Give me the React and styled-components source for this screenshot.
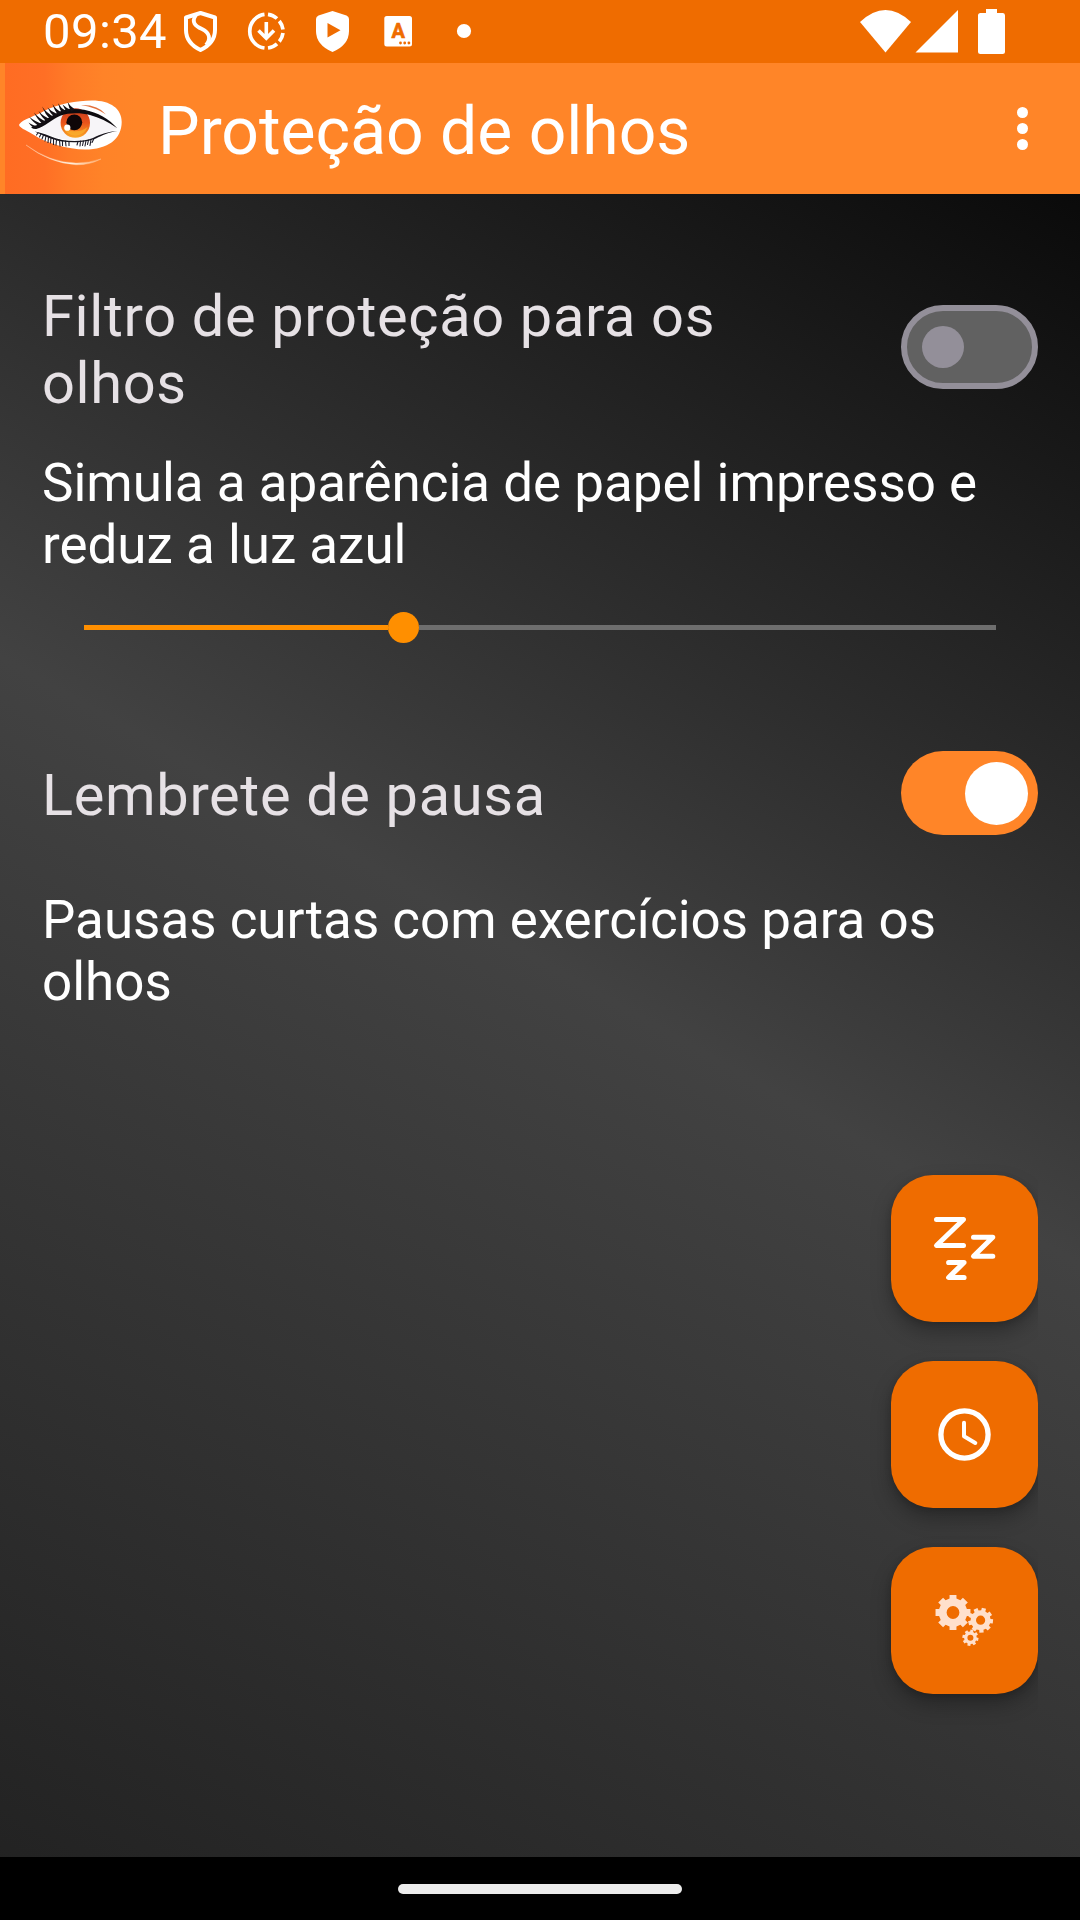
import React from "react";
import styled, { createGlobalStyle } from "styled-components";

const GlobalStyle = createGlobalStyle`
  * { box-sizing: border-box; }
  body { margin: 0; background: #000; font-family: Roboto, "Liberation Sans", sans-serif; }
`;

const Screen = styled.div`
  width: 1080px;
  height: 1920px;
  display: flex;
  flex-direction: column;
  overflow: hidden;
  background: linear-gradient(209.36deg, #000 0%, #424242 50%, #212121 100%);
`;

const StatusBar = styled.header`
  flex: none;
  height: 63px;
  display: flex;
  align-items: center;
  padding: 0 75px 0 43px;
  background: #ef6c00;
  color: #fff;
`;

const Time = styled.span`
  width: 124px;
  font-size: 49px;
  line-height: 63px;
  letter-spacing: 0.4px;
  white-space: nowrap;
`;

const StatusIcon = styled.svg`
  flex: none;
  display: block;
  width: ${(p) => p.$w}px;
  height: 63px;
`;

const Spacer = styled.div`
  flex: 1;
`;

const AppBar = styled.div`
  flex: none;
  height: 131px;
  display: flex;
  align-items: center;
  padding: 0 52px 0 5px;
  background: #ff8528;
`;

const Logo = styled.svg`
  flex: none;
  width: 131px;
  height: 131px;
  display: block;
`;

const Title = styled.h1`
  flex: 1;
  margin: 0 0 0 22px;
  padding-top: 6px;
  font-size: 66px;
  font-weight: 400;
  line-height: 77px;
  color: #fff;
  white-space: nowrap;
`;

const MenuButton = styled.button`
  display: flex;
  flex-direction: column;
  gap: 5px;
  padding: 0;
  border: 0;
  background: none;
`;

const Dot = styled.span`
  width: 11px;
  height: 11px;
  border-radius: 50%;
  background: #fff;
`;

const Content = styled.main`
  flex: 1;
  display: flex;
  flex-direction: column;
  padding: 89px 42px 0;
`;

const SettingRow = styled.div`
  flex: none;
  display: flex;
  align-items: flex-start;
  justify-content: space-between;
  height: ${(p) => p.$h}px;
  margin-top: ${(p) => p.$top || 0}px;
`;

const Label = styled.div`
  width: 720px;
  margin-top: ${(p) => p.$top || 0}px;
  font-size: 57.75px;
  line-height: 67px;
  letter-spacing: 0.65px;
  color: #e6e1e5;
`;

const Description = styled.p`
  flex: none;
  margin: ${(p) => p.$top}px 0 0;
  font-size: 52.95px;
  line-height: 62px;
  color: #fff;
`;

const Toggle = styled.button`
  flex: none;
  display: flex;
  align-items: center;
  justify-content: ${(p) => (p.$on ? "flex-end" : "flex-start")};
  width: 137px;
  height: 84px;
  margin: ${(p) => p.$top || 0}px 0 0;
  padding: ${(p) => (p.$on ? "0 10.5px" : "0 15px")};
  border: ${(p) => (p.$on ? "0" : "6px solid #938f99")};
  border-radius: 42px;
  background: ${(p) => (p.$on ? "#ff8528" : "#616161")};
`;

const Thumb = styled.span`
  width: ${(p) => (p.$on ? 63 : 42)}px;
  height: ${(p) => (p.$on ? 63 : 42)}px;
  border-radius: 50%;
  background: ${(p) => (p.$on ? "#fff" : "#938f99")};
`;

const Slider = styled.div`
  flex: none;
  display: flex;
  align-items: center;
  height: 31px;
  margin: 36px 42px 0;
`;

const Track = styled.div`
  width: ${(p) => p.$w};
  flex: ${(p) => (p.$w ? "none" : 1)};
  height: 5px;
  background: ${(p) => p.$color};
`;

const SliderThumb = styled.div`
  flex: none;
  width: 31px;
  height: 31px;
  border-radius: 50%;
  background: #ff8f00;
`;

const FabColumn = styled.div`
  flex: none;
  align-self: flex-end;
  display: flex;
  flex-direction: column;
  gap: 39px;
  margin-top: 162px;
  clip-path: inset(-40px 0 -60px -40px);
`;

const Fab = styled.button`
  width: 147px;
  height: 147px;
  padding: 0;
  border: 0;
  border-radius: 42px;
  background: #ef6c00;
  box-shadow: 0 10px 20px rgba(0, 0, 0, 0.28), 0 2px 6px rgba(0, 0, 0, 0.15);
`;

const FabIcon = styled.svg`
  display: block;
  width: 147px;
  height: 147px;
`;

const NavBar = styled.footer`
  flex: none;
  height: 63px;
  display: flex;
  align-items: center;
  justify-content: center;
  background: #000;
`;

const Handle = styled.div`
  width: 284px;
  height: 10px;
  margin-top: 1px;
  border-radius: 5px;
  background: #ececec;
`;

function gearPath(cx, cy, root, tip, hole, teeth, turn) {
  const step = (Math.PI * 2) / teeth;
  const pt = (r, a) => `${(cx + r * Math.cos(a)).toFixed(2)} ${(cy + r * Math.sin(a)).toFixed(2)}`;
  const points = [];
  for (let i = 0; i < teeth; i++) {
    const a = turn + i * step;
    const half = step * 0.31;
    const tipHalf = Math.asin((root * Math.sin(half)) / tip);
    points.push(pt(root, a - half), pt(tip, a - tipHalf), pt(tip, a + tipHalf), pt(root, a + half));
  }
  return `M${points.join("L")}Z M${cx - hole} ${cy}a${hole} ${hole} 0 1 0 ${hole * 2} 0a${hole} ${hole} 0 1 0 ${-hole * 2} 0Z`;
}

// Each upper lash: [root x, root y, bend x, bend y, tip x, tip y]
const upperLashes = [
  [38, 127.5, 32, 126.5, 28.5, 122.5],
  [42, 125.5, 34, 122.5, 29, 116.5],
  [45, 123, 38, 119.5, 34, 112.5],
  [49, 120.5, 42, 117, 38.5, 111],
  [52, 118, 45.5, 113.5, 42, 106.5],
  [56, 115.5, 50.5, 112.5, 47.5, 107.5],
  [60, 113.5, 55, 110.5, 52.5, 104],
  [64, 112, 60, 109, 58, 103.2],
  [69, 111, 65, 108.5, 62.5, 104.5],
  [73, 110.5, 69.5, 107.5, 67.5, 102],
];
const lashPath = ([rx, ry, bx, by, tx, ty]) =>
  `M${rx - 1.8} ${ry + 1.2}Q${bx - 0.4} ${by + 0.7} ${tx} ${ty}Q${bx + 1} ${by - 0.6} ${rx + 2} ${ry - 1}Z`;

const lowerLashes = [
  "M38 133 L36.5 135", "M41 134 L39.5 137", "M43.500 135 L42 139", "M46 136 L45 141", "M48.500 137 L48 142.500",
  "M51 138 L50.500 143", "M53.500 138.500 L53.500 144.500", "M56.500 139.500 L56 145", "M59.500 140 L60 146", "M62.500 140.500 L62.500 145.500",
  "M65.500 141 L66 146", "M69 141.500 L69 145.500", "M78 141.500 L77 145", "M80.500 141 L80 146", "M83.500 141 L82.500 145.500",
  "M86 140.500 L85 146", "M88.500 140 L87.500 144.500", "M91 139.500 L90 145.500", "M94 138.500 L92 142.500",
];

function EyeLogo() {
  return (
    <Logo viewBox="5 63 131 131">
      <defs>
        <linearGradient id="fade" x1="0" x2="1">
          <stop offset="0" stopColor="#ff6c23" />
          <stop offset="0.3" stopColor="#ff6f25" />
          <stop offset="0.5" stopColor="#ff7b27" />
          <stop offset="0.75" stopColor="#ff8328" />
          <stop offset="1" stopColor="#ff8528" />
        </linearGradient>
        <linearGradient id="iris" x1="0" x2="0" y1="0" y2="1">
          <stop offset="0" stopColor="#c4391c" />
          <stop offset="0.5" stopColor="#ea541b" />
          <stop offset="1" stopColor="#fba726" />
        </linearGradient>
        <linearGradient id="swoosh" x1="0" x2="1">
          <stop offset="0" stopColor="#ffd9b8" stopOpacity="0.7" />
          <stop offset="0.6" stopColor="#fff0df" />
          <stop offset="1" stopColor="#ffc08a" stopOpacity="0.6" />
        </linearGradient>
      </defs>
      <rect x="5" y="63" width="131" height="131" fill="url(#fade)" />
      <path d="M19.500 124C23 119 36 116 45 110.500C58 104 77 100.500 92 100.500C111 100.500 121.700 109 121.700 122C121.700 139 108 149.500 85 149.500C68 149.500 46 143 34 135C28 131 17 127 19.500 124Z" fill="#fff" />
      <path d="M37 130C52 115 68 111 84 113C99 115 110 121 117 129C105 131 99 138 86 140.500C66 142 50 136 37 130Z" fill="#f7f5f8" />
      <circle cx="75.300" cy="123" r="14.700" fill="url(#iris)" />
      <path d="M63 127A13 13 0 0 0 87.500 127A16 12 0 0 1 63 127Z" fill="#fbb02d" opacity="0.75" />
      <circle cx="74.300" cy="122.300" r="7.900" fill="#0f0608" />
      <circle cx="67.300" cy="127.700" r="3.100" fill="#fff" />
      <path d="M31 127.500C40 125 48 117 60 111.500C67 108.500 76 108.500 84 109.800C98 112.500 109 119 117.300 128.300C108 121.500 99 117.500 90 115C80 112.500 68 113 61 115.500C52 119 45 127 36 129Q33 129 31 127.500Z" fill="#0e0b0f" />
      <path d="M34.500 131.500C45 133 52 138 62 140C74 142 86 141 93 138C101 134 108 131.500 117.500 131C109 132 102 135.500 96 138.500C88 142 74 143.300 62 141.500C51 139.500 42 135 34.500 131.500Z" fill="#17141c" />
      <path d="M81 105Q98 104.500 106 114.500Q96 107.500 81 105Z" fill="#e2703c" />
      <g fill="#141015">
        {upperLashes.map((lash) => <path key={lash[0]} d={lashPath(lash)} />)}
      </g>
      <g fill="none" stroke="#1d1c2a" strokeWidth="1.100" strokeLinecap="round">
        {lowerLashes.map((d) => <path key={d} d={d} />)}
      </g>
      <path d="M26 145Q50 162.500 76 163Q89 163.200 101 159Q90 165 76 164.800Q49 163 26 145Z" fill="url(#swoosh)" stroke="#ffe3c8" strokeWidth="0.300" />
    </Logo>
  );
}

function NotificationIcons() {
  return (
    <>
      <StatusIcon $w={66} viewBox="167 0 66 63" fill="none" stroke="#fff" strokeWidth="4" strokeLinejoin="round">
        <path d="M200.500 13L215 17.500V30Q215 43 200.500 50Q186 43 186 30V17.500Z" />
        <path d="M196 15C191 22 195 26 202 29C210 33 211 39 206 45" strokeWidth="3.800" />
      </StatusIcon>
      <StatusIcon $w={66} viewBox="233 0 66 63" fill="none" stroke="#fff" strokeWidth="3.700">
        <path d="M264.500 14.300A17 17 0 0 0 264.500 48" />
        <path d="M268 14.300A17 17 0 0 1 277 18.500" />
        <path d="M279.300 21A17 17 0 0 1 283 29.500" />
        <path d="M283 33A17 17 0 0 1 279.300 41.500" />
        <path d="M277 43.800A17 17 0 0 1 268 48" />
        <path d="M266.300 22V38M258.500 30.500L266.300 38.300L274 30.500" strokeWidth="3.600" />
      </StatusIcon>
      <StatusIcon $w={66} viewBox="299 0 66 63">
        <path d="M332.500 11L346.500 15.500Q349 16.500 349 19V31Q349 45 332.500 52Q316 45 316 31V19Q316 16.500 318.500 15.500Z" fill="#fff" />
        <path d="M327.500 23V37.500L340.500 30.200Z" fill="#ef6c00" />
      </StatusIcon>
      <StatusIcon $w={66} viewBox="365 0 66 63">
        <rect x="384.300" y="16" width="27.700" height="30.500" rx="2.500" fill="#fff" />
        <text x="398.200" y="37.800" textAnchor="middle" fontFamily="Roboto, sans-serif" fontWeight="700" fontSize="20" fill="#ef6c00" stroke="#ef6c00" strokeWidth="0.600">A</text>
        <g fill="#ef6c00">
          <circle cx="400.500" cy="43" r="1.400" />
          <circle cx="404.700" cy="43" r="1.400" />
          <circle cx="408.900" cy="43" r="1.400" />
        </g>
      </StatusIcon>
      <StatusIcon $w={66} viewBox="431 0 66 63">
        <circle cx="464" cy="31" r="7.100" fill="#fff" />
      </StatusIcon>
    </>
  );
}

export default function App() {
  return (
    <>
      <GlobalStyle />
      <Screen>
        <StatusBar>
          <Time>09:34</Time>
          <NotificationIcons />
          <Spacer />
          <StatusIcon $w={54} viewBox="859 0 54 63">
            <path d="M860 22Q885.500 -2 911 22L885.500 52.500Z" fill="#fff" />
          </StatusIcon>
          <StatusIcon $w={50} viewBox="913 0 50 63">
            <path d="M915.500 52.500L958 10V52.500Z" fill="#fff" />
          </StatusIcon>
          <StatusIcon $w={42} viewBox="963 0 42 63">
            <path d="M986 9H997V13H1003Q1005 13 1005 15.500V51.500Q1005 54 1002.500 54H980.500Q978 54 978 51.500V15.500Q978 13 980.500 13H986Z" fill="#fff" />
          </StatusIcon>
        </StatusBar>
        <AppBar>
          <EyeLogo />
          <Title>Proteção de olhos</Title>
          <MenuButton aria-label="Menu">
            <Dot />
            <Dot />
            <Dot />
          </MenuButton>
        </AppBar>
        <Content>
          <SettingRow $h={134}>
            <Label>Filtro de proteção para os olhos</Label>
            <Toggle $on={false} $top={22}><Thumb $on={false} /></Toggle>
          </SettingRow>
          <Description $top={35}>Simula a aparência de papel impresso e reduz a luz azul</Description>
          <Slider>
            <Track $w="304px" $color="#ff8f00" />
            <SliderThumb />
            <Track $color="#6e6e6e" />
          </Slider>
          <SettingRow $h={84} $top={108}>
            <Label $top={11}>Lembrete de pausa</Label>
            <Toggle $on><Thumb $on /></Toggle>
          </SettingRow>
          <Description $top={54}>Pausas curtas com exercícios para os olhos</Description>
          <FabColumn>
            <Fab aria-label="Dormir">
              <FabIcon viewBox="0 0 147 147" fill="none" stroke="#fff" strokeLinecap="round" strokeLinejoin="round">
                <polyline points="45.5,44.500 72.500,44.500 45.500,70.500 72.500,70.500" strokeWidth="5" />
                <polyline points="82.500,62.300 101.800,62.300 82.500,81.200 101.800,81.200" strokeWidth="5" />
                <polyline points="57.700,87.500 73,87.500 57.700,102.500 73,102.500" strokeWidth="5.200" />
              </FabIcon>
            </Fab>
            <Fab aria-label="Horário">
              <FabIcon viewBox="0 0 147 147" fill="none" stroke="#fff" strokeLinecap="round" strokeLinejoin="round">
                <circle cx="73.500" cy="73.500" r="23.600" strokeWidth="5.300" />
                <path d="M73 61.700V75.300L84.300 82" strokeWidth="4" />
              </FabIcon>
            </Fab>
            <Fab aria-label="Configurações">
              <FabIcon viewBox="0 0 147 147" fill="#ffe0cc" fillRule="evenodd">
                <path d={gearPath(62, 65.5, 14.3, 17.8, 6.4, 8, 0)} />
                <path d={gearPath(89.6, 73.2, 10, 12.6, 4.6, 9, 0.1)} />
                <path d={gearPath(79.4, 90.8, 6.3, 8.2, 3, 8, 0.2)} />
              </FabIcon>
            </Fab>
          </FabColumn>
        </Content>
        <NavBar>
          <Handle />
        </NavBar>
      </Screen>
    </>
  );
}
